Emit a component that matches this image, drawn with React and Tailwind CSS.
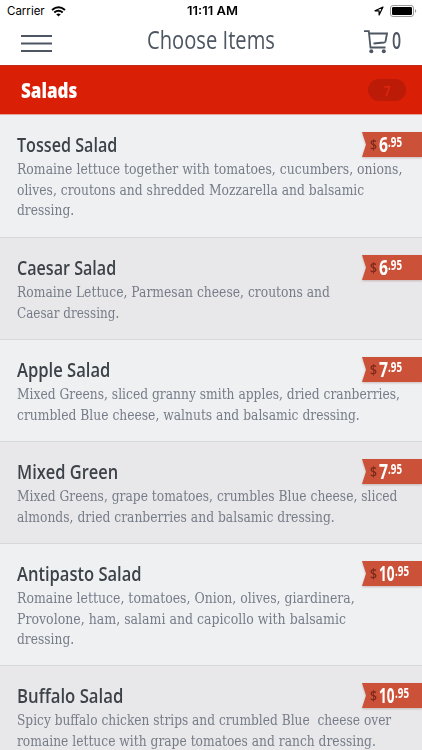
import { useLayoutEffect, useRef, useState } from 'react';

// Condenses one line of text horizontally to the given width.
function Fit({ width, className = '', children }) {
  const ref = useRef(null);
  const [scale, setScale] = useState(1);
  useLayoutEffect(() => {
    setScale(width / ref.current.offsetWidth);
  }, [width, children]);
  return (
    <span className={`block overflow-visible whitespace-pre ${className}`} style={{ width }}>
      <span ref={ref} className="inline-block origin-left" style={{ transform: `scaleX(${scale})` }}>
        {children}
      </span>
    </span>
  );
}

const items = [
  { name: 'Tossed Salad', width: 100, price: '6', height: 'h-[123px]', lines: [
    ['Romaine lettuce together with tomatoes, cucumbers, onions,', 385],
    ['olives, croutons and shredded Mozzarella and balsamic', 347],
    ['dressing.', 57],
  ] },
  { name: 'Caesar Salad', width: 99, price: '6', height: 'h-[102px]', lines: [
    ['Romaine Lettuce, Parmesan cheese, croutons and', 313],
    ['Caesar dressing.', 102],
  ] },
  { name: 'Apple Salad', width: 93, price: '7', height: 'h-[102px]', lines: [
    ['Mixed Greens, sliced granny smith apples, dried cranberries,', 383],
    ['crumbled Blue cheese, walnuts and balsamic dressing.', 343],
  ] },
  { name: 'Mixed Green', width: 101, price: '7', height: 'h-[102px]', lines: [
    ['Mixed Greens, grape tomatoes, crumbles Blue cheese, sliced', 380],
    ['almonds, dried cranberries and balsamic dressing.', 318],
  ] },
  { name: 'Antipasto Salad', width: 125, price: '10', height: 'h-[122px]', lines: [
    ['Romaine lettuce, tomatoes, Onion, olives, giardinera,', 338],
    ['Provolone, ham, salami and capicollo with balsamic', 329],
    ['dressing.', 57],
  ] },
  { name: 'Buffalo Salad', width: 106, price: '10', height: 'h-[102px]', lines: [
    ['Spicy buffalo chicken strips and crumbled Blue  cheese over', 374],
    ['romaine lettuce with grape tomatoes and ranch dressing.', 359],
  ] },
];

function PriceTag({ price }) {
  return (
    <div className="absolute top-[17px] right-0 h-[26px] w-[60px] drop-shadow-[0_1px_1px_rgba(120,60,50,0.3)]">
      <div className="flex h-[25px] bg-[#cb5139] pl-2 font-['Open_Sans'] font-bold text-white [clip-path:polygon(0_0,100%_0,100%_100%,0_100%,4px_50%)]">
        <Fit width={7} className="text-[14px] leading-[26px] font-semibold text-[#7c2a1a]">$</Fit>
        <Fit width={price === '10' ? 15.5 : 9} className="ml-[2px] text-[21px] leading-[24px]">{price}</Fit>
        <Fit width={14} className="text-[14px] leading-[19px]">.95</Fit>
      </div>
    </div>
  );
}

function MenuItem({ item, shaded }) {
  return (
    <li className={`relative shrink-0 border-b border-[#d7d8dc] pt-[16px] pl-[17px] ${item.height} ${shaded ? 'bg-[#e8e8ea]' : 'bg-[#eff0f2]'}`}>
      <Fit width={item.width} className="h-[28px] font-['Open_Sans'] text-[20.5px] leading-[26px] font-semibold text-[#3c4248]">{item.name}</Fit>
      <div className="font-['DejaVu_Serif'] text-[14px] leading-[20.5px] text-[#767c88]">
        {item.lines.map(([text, width]) => (
          <Fit key={text} width={width} className="h-[20.5px]">{text}</Fit>
        ))}
      </div>
      <PriceTag price={item.price} />
    </li>
  );
}

export default function App() {
  return (
    <div className="flex h-[750px] w-[422px] flex-col overflow-hidden bg-white">
      <div className="flex h-[22px] shrink-0 items-center justify-between pr-[5px] pl-[7px] font-['Inter'] text-[11.5px] text-black">
        <div className="flex w-32 items-center gap-[6px]">
          <Fit width={38} className="leading-[22px]">Carrier</Fit>
          <svg width="15" height="11" viewBox="0 0 15 11" fill="none" stroke="#000" strokeWidth="2">
            <path d="M1 4Q7.5-1.5 14 4M3.3 6.5Q7.5 3 11.7 6.5" />
            <path d="M7.5 10.5 5.2 8.3Q7.5 6.5 9.8 8.3Z" fill="#000" stroke="none" />
          </svg>
        </div>
        <Fit width={51} className="leading-[22px] font-semibold">11:11 AM</Fit>
        <div className="flex w-32 items-center justify-end gap-[6px]">
          <svg width="10" height="10" viewBox="0 0 10 10" fill="none" stroke="#000" strokeWidth="1.2" strokeLinejoin="round">
            <path d="M9 1 1 4.8H5.1V9Z" />
          </svg>
          <svg width="27" height="12" viewBox="0 0 27 12">
            <rect x=".5" y=".5" width="23" height="11" rx="2.5" fill="none" stroke="#999" />
            <rect x="2" y="2" width="20" height="8" rx="1.2" />
            <path d="M25 4q2.5 2 0 4z" fill="#999" />
          </svg>
        </div>
      </div>

      <header className="flex h-[43px] shrink-0 justify-between pr-[21px] pl-[21px] font-['Open_Sans'] text-[#4d5662]">
        <div className="w-[80px] pt-[13px]">
          <svg width="31" height="17" viewBox="0 0 31 17" stroke="#4d5662" strokeWidth="2">
            <path d="M0 1H31M0 8.5H31M0 16H31" />
          </svg>
        </div>
        <Fit width={128} className="text-[26px] leading-[35px] font-normal">Choose Items</Fit>
        <div className="flex w-[80px] justify-end gap-[4px]">
          <svg className="mt-2" width="24" height="24" viewBox="0 0 24 24" fill="none" stroke="#4d5662" strokeWidth="1.8">
            <path d="M0 1.2H4.8L6.5 17.5H21.5M5.2 3.5H23L21.5 11.5Q21.2 12.3 20 12.5L9.5 13.5" />
            <circle cx="7.3" cy="21.2" r="2" fill="#4d5662" stroke="none" />
            <circle cx="19.8" cy="21.2" r="2" fill="#4d5662" stroke="none" />
          </svg>
          <Fit width={9} className="text-[23px] leading-[36px] font-semibold">0</Fit>
        </div>
      </header>

      <div className="flex h-[50px] shrink-0 items-center justify-between border-t border-b border-t-[#bd2c18] border-b-[#e5a59c] bg-[#da1f07] pr-4 pl-[21px] font-['Open_Sans']">
        <Fit width={56} className="text-[21px] leading-[46px] font-extrabold text-white">Salads</Fit>
        <div className="flex h-[22px] w-[38px] items-center justify-center rounded-full bg-[#bc1b08] text-[#da2510]">
          <Fit width={7} className="text-[15px] leading-[22px] font-bold">7</Fit>
        </div>
      </div>

      <ul className="flex min-h-0 flex-1 flex-col">
        {items.map((item, i) => (
          <MenuItem key={item.name} item={item} shaded={i % 2 === 1} />
        ))}
      </ul>
    </div>
  );
}
